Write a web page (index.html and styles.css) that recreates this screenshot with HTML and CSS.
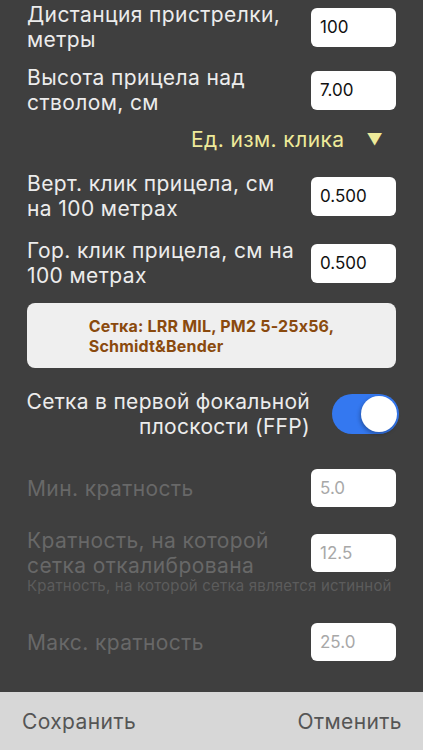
FILE: index.html
```html
<!DOCTYPE html>
<html lang="ru">
<head>
  <meta charset="UTF-8" />
  <meta name="viewport" content="width=device-width, initial-scale=1" />
  <title>Настройки прицела</title>
  <link rel="stylesheet" href="styles.css">
</head>
<body>

  <div class="content">
    <div class="row row-first">
      <label class="label">Дистанция пристрелки,<br>метры</label>
      <input class="field" type="text" value="100">
    </div>

    <div class="row row-height">
      <label class="label">Высота прицела над<br>стволом, см</label>
      <input class="field" type="text" value="7.00">
    </div>

    <div class="units">
      <span>Ед. изм. клика</span>
      <span class="arrow">&#9660;</span>
    </div>

    <div class="row row-vclick">
      <label class="label">Верт. клик прицела, см<br>на 100 метрах</label>
      <input class="field" type="text" value="0.500">
    </div>

    <div class="row row-hclick">
      <label class="label">Гор. клик прицела, см на<br>100 метрах</label>
      <input class="field" type="text" value="0.500">
    </div>

    <button class="reticle">
      <span>Сетка: LRR MIL, PM2 5-25x56,<br>Schmidt&amp;Bender</span>
    </button>

    <div class="ffp">
      <span class="ffp-label">Сетка в первой фокальной<br>плоскости (FFP)</span>
      <span class="switch on"><span class="knob"></span></span>
    </div>

    <div class="row row-min disabled">
      <label class="label">Мин. кратность</label>
      <input class="field" type="text" value="5.0" disabled>
    </div>

    <div class="row row-calib disabled">
      <label class="label">Кратность, на которой<br>сетка откалибрована</label>
      <input class="field" type="text" value="12.5" disabled>
    </div>
    <p class="hint">Кратность, на которой сетка является истинной</p>

    <div class="row row-max disabled">
      <label class="label">Макс. кратность</label>
      <input class="field" type="text" value="25.0" disabled>
    </div>
  </div>

  <div class="footer">
    <button class="footer-btn">Сохранить</button>
    <button class="footer-btn">Отменить</button>
  </div>

</body>
</html>
```

FILE: styles.css
```css
html, body {
  margin: 0;
  padding: 0;
}

body {
  font-family: Inter, 'Liberation Sans', sans-serif;
  font-feature-settings: "calt" 0;
  background-color: #3f3f3f;
  color: #ececec;
  width: 423px;
  height: 750px;
  display: flex;
  flex-direction: column;
  overflow: hidden;
}

.content {
  flex: 1;
}

.row {
  display: flex;
  align-items: center;
  justify-content: space-between;
  padding: 0 27px;
}

.label {
  font-size: 21px;
  line-height: 25px;
  letter-spacing: 0.4px;
  white-space: nowrap;
}

.field {
  flex-shrink: 0;
  width: 85px;
  height: 39px;
  box-sizing: border-box;
  border: none;
  border-radius: 6px;
  background-color: #fff;
  color: #111;
  padding: 0 9px;
  font-family: Inter, 'Liberation Sans', sans-serif;
  font-size: 17px;
  outline: none;
}

.row-first { margin-top: 2px; }
.row-height { margin-top: 13px; }
.row-vclick { margin-top: 19px; }
.row-hclick { margin-top: 17px; }

.units {
  margin-top: 12px;
  padding-right: 40px;
  display: flex;
  justify-content: flex-end;
  align-items: center;
  gap: 22px;
  color: #eeea9a;
  font-size: 21px;
  line-height: 25px;
  letter-spacing: 0.4px;
}

.units .arrow {
  font-size: 16px;
}

.reticle {
  display: flex;
  justify-content: center;
  align-items: center;
  width: 369px;
  height: 65px;
  margin: 15px 0 0 27px;
  border: none;
  border-radius: 8px;
  background-color: #efefef;
  color: #8a4a0e;
  font-family: Inter, 'Liberation Sans', sans-serif;
  font-feature-settings: "calt" 0;
  font-weight: bold;
  font-size: 16px;
  line-height: 20px;
  letter-spacing: 0.2px;
  text-align: left;
}

.ffp {
  margin-top: 21px;
  padding: 0 24px 0 20px;
  display: flex;
  justify-content: flex-end;
  align-items: center;
  gap: 22px;
}

.ffp-label {
  text-align: right;
  font-size: 21px;
  line-height: 25px;
  letter-spacing: 0.3px;
  white-space: nowrap;
}

.switch {
  flex-shrink: 0;
  position: relative;
  width: 67px;
  height: 40px;
  border-radius: 20px;
  background-color: #3478f0;
}

.switch .knob {
  position: absolute;
  top: 2px;
  right: 2px;
  width: 36px;
  height: 36px;
  border-radius: 50%;
  background-color: #fff;
  box-shadow: -1px 2px 4px rgba(0, 0, 0, 0.3);
}

.disabled .label {
  color: #686868;
}

.disabled .field {
  color: #a8a8a8;
  height: 38px;
}

.row-min { margin-top: 30px; }
.row-calib { margin-top: 21px; }
.row-max { margin-top: 29px; }

.hint {
  margin: 0 0 0 27px;
  font-size: 15px;
  line-height: 16px;
  letter-spacing: 0.2px;
  color: #5c5c5c;
  white-space: nowrap;
}

.footer {
  height: 58px;
  background-color: #d7d7d7;
  display: flex;
  justify-content: space-between;
  align-items: center;
  padding: 0 21px 0 22px;
}

.footer-btn {
  border: none;
  background: none;
  padding: 0;
  color: #555;
  font-family: Inter, 'Liberation Sans', sans-serif;
  font-size: 21px;
  letter-spacing: 0.4px;
}
```
